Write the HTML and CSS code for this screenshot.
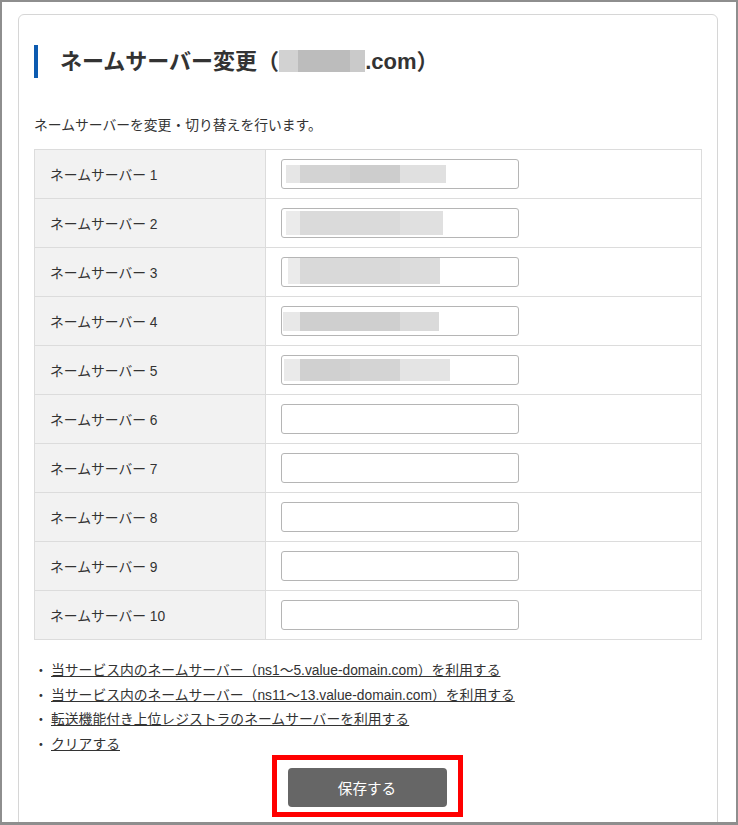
FILE: index.html
```html
<!DOCTYPE html>
<html lang="ja">
<head>
<meta charset="utf-8">
<title>ネームサーバー変更</title>
<link rel="stylesheet" href="styles.css">
</head>
<body>
<div class="frame">
  <div class="card">
    <h1 class="title"><span>ネームサーバー変更（</span><span class="domain-redact"></span><span>.com）</span></h1>
    <p class="desc">ネームサーバーを変更・切り替えを行います。</p>
    <div class="ns-table">
      <div class="row"><div class="label">ネームサーバー 1</div><div class="cell"><div class="field"><span class="redact r1"></span></div></div></div>
      <div class="row"><div class="label">ネームサーバー 2</div><div class="cell"><div class="field"><span class="redact r2"></span></div></div></div>
      <div class="row"><div class="label">ネームサーバー 3</div><div class="cell"><div class="field"><span class="redact r3"></span></div></div></div>
      <div class="row"><div class="label">ネームサーバー 4</div><div class="cell"><div class="field"><span class="redact r4"></span></div></div></div>
      <div class="row"><div class="label">ネームサーバー 5</div><div class="cell"><div class="field"><span class="redact r5"></span></div></div></div>
      <div class="row"><div class="label">ネームサーバー 6</div><div class="cell"><div class="field"></div></div></div>
      <div class="row"><div class="label">ネームサーバー 7</div><div class="cell"><div class="field"></div></div></div>
      <div class="row"><div class="label">ネームサーバー 8</div><div class="cell"><div class="field"></div></div></div>
      <div class="row"><div class="label">ネームサーバー 9</div><div class="cell"><div class="field"></div></div></div>
      <div class="row"><div class="label">ネームサーバー 10</div><div class="cell"><div class="field"></div></div></div>
    </div>
    <ul class="links">
      <li><span class="dot">・</span><a href="#">当サービス内のネームサーバー（ns1〜5.value-domain.com）を利用する</a></li>
      <li><span class="dot">・</span><a href="#">当サービス内のネームサーバー（ns11〜13.value-domain.com）を利用する</a></li>
      <li><span class="dot">・</span><a href="#">転送機能付き上位レジストラのネームサーバーを利用する</a></li>
      <li><span class="dot">・</span><a href="#">クリアする</a></li>
    </ul>
    <div class="highlight"><button class="save" type="button">保存する</button></div>
  </div>
</div>
</body>
</html>
```
FILE: styles.css
```css
* { box-sizing: border-box; }
html, body { margin: 0; padding: 0; background: #fff; }
body {
  font-family: "Liberation Sans", "Noto Sans CJK JP", sans-serif;
  color: #333;
  font-size: 13.8px;
}
.frame {
  width: 738px;
  height: 825px;
  border: 2px solid #8e8e8e;
  border-bottom-width: 3px;
  overflow: hidden;
}
.card {
  margin: 12px 0 0 16px;
  width: 700px;
  height: 900px;
  border: 1px solid #d6d6d6;
  border-radius: 6px;
  padding: 30px 15px 0;
}
.title {
  margin: 0;
  height: 33px;
  border-left: 4px solid #0d5bb0;
  padding-left: 22px;
  font-size: 22px;
  font-weight: bold;
  line-height: 33px;
  color: #333;
  display: flex;
  align-items: center;
  white-space: nowrap;
}
.domain-redact {
  display: block;
  width: 86px;
  height: 22px;
  margin-top: -1px;
  background: linear-gradient(to right, #d2d2d2 0 19px, #bcbcbc 19px 71px, #cacaca 71px 86px);
}
.desc {
  margin: 38px 0 0;
  line-height: 20px;
}
.ns-table {
  margin-top: 13px;
  border: 1px solid #dcdcdc;
}
.row {
  display: grid;
  grid-template-columns: 231px 1fr;
  height: 48px;
}
.row + .row {
  height: 49px;
  border-top: 1px solid #dcdcdc;
}
.label {
  background: #f2f2f2;
  border-right: 1px solid #dcdcdc;
  padding-left: 15px;
  padding-bottom: 1px;
  display: flex;
  align-items: center;
}
.cell {
  padding-left: 15px;
  display: flex;
  align-items: center;
}
.field {
  width: 238px;
  height: 30px;
  border: 1px solid #b5b5b5;
  border-radius: 3px;
  background: #fff;
  display: flex;
  align-items: center;
}
.redact { display: block; }
.r1 {
  margin-left: 4px; width: 160px; height: 18px;
  background: linear-gradient(to right, #e6e6e6 0 14px, #d3d3d3 14px 64px, #cdcdcd 64px 114px, #e0e0e0 114px 160px);
}
.r2 {
  margin-left: 4px; width: 157px; height: 24px;
  background: linear-gradient(to right, #ebebeb 0 14px, #dadada 14px 114px, #e0e0e0 114px 157px);
}
.r3 {
  margin-left: 6px; width: 152px; height: 26px; margin-top: -2px;
  background: linear-gradient(to right, #ebebeb 0 12px, #d9d9d9 12px 112px, #dcdcdc 112px 152px);
}
.r4 {
  margin-left: 1px; width: 156px; height: 19px;
  background: linear-gradient(to right, #e8e8e8 0 17px, #cfcfcf 17px 117px, #dadada 117px 156px);
}
.r5 {
  margin-left: 2px; width: 166px; height: 22px;
  background: linear-gradient(to right, #eaeaea 0 16px, #d0d0d0 16px 66px, #d4d4d4 66px 116px, #e4e4e4 116px 166px);
}
.links {
  list-style: none;
  margin: 19px 0 0;
  padding: 0;
  line-height: 24.5px;
}
.dot {
  display: inline-block;
  width: 17px;
}
.links a {
  color: #333;
  text-decoration: underline;
}
.highlight {
  width: 191px;
  margin: -2px auto 0;
  border: 5px solid #f00;
  padding: 8px 11px 5px;
  position: relative;
  left: -1px;
}
.save {
  display: block;
  width: 159px;
  height: 39px;
  border: 0;
  border-radius: 4px;
  background: #666;
  color: #fff;
  font-family: "Liberation Sans", "Noto Sans CJK JP", sans-serif;
  font-size: 14.6px;
  padding: 0;
}
```
